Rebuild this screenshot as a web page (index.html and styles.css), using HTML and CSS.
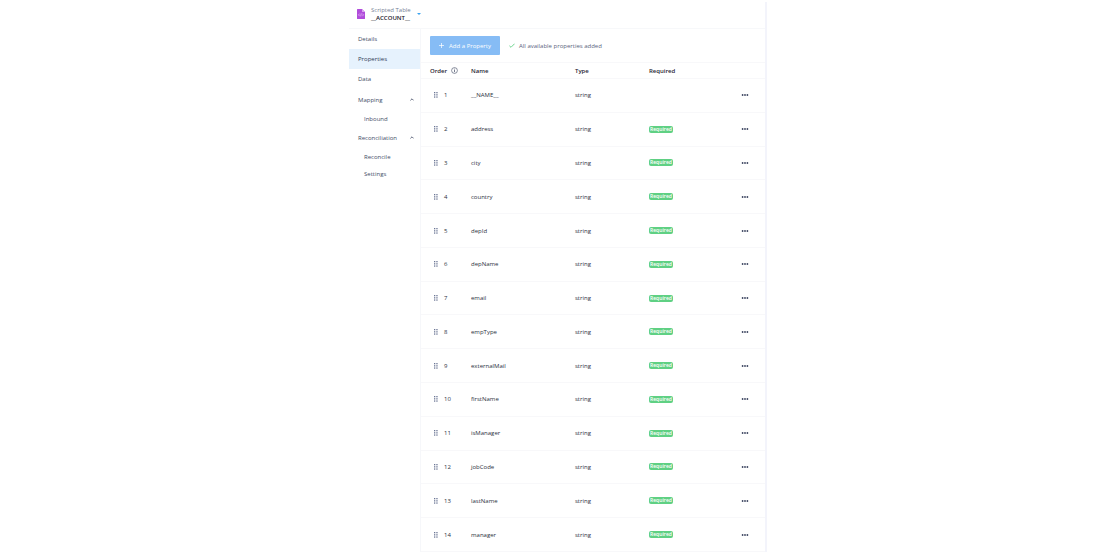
FILE: index.html
```
<!DOCTYPE html>
<html lang="en">
<head>
<meta charset="utf-8">
<title>Scripted Table – Properties</title>
<link rel="stylesheet" href="styles.css">
</head>
<body>
<svg class="sprite" aria-hidden="true">
  <symbol id="grip" viewBox="0 0 4 6"><g fill="#6b7694"><rect x="0" y="0" width="1.3" height="1.3"/><rect x="2.3" y="0" width="1.3" height="1.3"/><rect x="0" y="2.2" width="1.3" height="1.3"/><rect x="2.3" y="2.2" width="1.3" height="1.3"/><rect x="0" y="4.4" width="1.3" height="1.3"/><rect x="2.3" y="4.4" width="1.3" height="1.3"/></g></symbol>
  <symbol id="dots" viewBox="0 0 8 2"><g fill="#3c4560"><circle cx="1.6" cy="1" r=".9"/><circle cx="4" cy="1" r=".9"/><circle cx="6.4" cy="1" r=".9"/></g></symbol>
  <symbol id="up" viewBox="0 0 4 3"><path d="M.4 2.4 2 .8l1.6 1.6" fill="none" stroke="#3c4560" stroke-width=".8"/></symbol>
</svg>
<div class="shell">
  <header class="top">
    <svg class="doc" viewBox="0 0 8 10" aria-hidden="true"><path d="M.6 0H5l3 3v6.4a.6.6 0 0 1-.6.6H.6a.6.6 0 0 1-.6-.6V.6A.6.6 0 0 1 .6 0z" fill="#b14ddb"/><path d="M5 0v3h3z" fill="#d9a3f0"/><path d="M2.7 4.6 1.5 5.9l1.2 1.3M5.3 4.6l1.2 1.3-1.2 1.3M4.3 4.5l-.6 2.8" fill="none" stroke="#f0d4fb" stroke-width=".6"/></svg>
    <div class="title"><span class="kind">Scripted Table</span><strong class="name">__ACCOUNT__</strong></div>
    <button class="switch" aria-label="Switch table"><svg viewBox="0 0 4 2"><path d="M0 0h4L2 2z" fill="#3ba3f0"/></svg></button>
  </header>
  <div class="body">
    <nav class="side">
      <a href="#details">Details</a>
      <a href="#properties" class="active">Properties</a>
      <a href="#data">Data</a>
      <button class="group">Mapping<svg><use href="#up"/></svg></button>
      <a href="#inbound" class="sub">Inbound</a>
      <button class="group">Reconciliation<svg><use href="#up"/></svg></button>
      <a href="#reconcile" class="sub">Reconcile</a>
      <a href="#settings" class="sub">Settings</a>
    </nav>
    <main class="main">
      <div class="bar">
        <button class="add" disabled><svg viewBox="0 0 5 5"><path d="M2.5 0v5M0 2.5h5" stroke="#fff" stroke-width=".7"/></svg>Add a Property</button>
        <svg class="check" viewBox="0 0 6 5"><path d="M.4 2.8 2 4.3 5.6.7" fill="none" stroke="#5fd083" stroke-width=".9"/></svg>
        <span class="note">All available properties added</span>
      </div>
      <table class="props">
        <thead><tr><th class="order">Order <svg class="info" viewBox="0 0 7 7"><circle cx="3.5" cy="3.5" r="2.9" fill="none" stroke="#3c4560" stroke-width=".6"/><path d="M3.5 3v2.1M3.5 1.7v.8" stroke="#3c4560" stroke-width=".7"/></svg></th><th class="col-name">Name</th><th class="col-type">Type</th><th class="col-req">Required</th><th></th></tr></thead>
        <tbody id="rows"></tbody>
      </table>
    </main>
  </div>
</div>
<script src="rows.js"></script>
</body>
</html>
```
FILE: styles.css
```
* { box-sizing: border-box; }
body { margin: 0; padding: 2px 4px 6px 0; background: #fff; color: #2b3040; font: 6px/8px "Open Sans", sans-serif; }
button { font: inherit; color: inherit; border: 0; padding: 0; background: none; }
a { color: inherit; text-decoration: none; }
svg { display: block; flex: none; }
.sprite { position: absolute; width: 0; height: 0; }
.shell { max-width: 418px; margin: 0 auto; border-right: 2px solid #f3f4fb; }
.top { display: flex; align-items: center; height: 27px; padding: 0 8px 2px; border-bottom: 1px solid #f7f8fa; }
.doc { width: 8px; height: 10px; margin-right: 6px; }
.title { display: flex; flex-direction: column; }
.kind { color: #767f96; }
.name { color: #1c202c; font-weight: 600; }
.switch { margin-left: 6px; }
.switch svg { width: 4px; height: 2px; }
.body { display: flex; }
.side { display: flex; flex-direction: column; width: 71px; color: #434d66; }
.side a { display: flex; align-items: center; height: 20px; padding: 0 6px 0 9px; }
.group { display: flex; align-items: center; justify-content: space-between; height: 21px; padding: 0 6px 0 9px; }
.group svg { width: 4px; height: 3px; }
.side .active { background: #e6f2fd; color: #303a54; }
.side .sub { height: 17px; padding-left: 15px; }
.main { flex: 1; border-left: 1px solid #f6f7fa; }
.bar { display: flex; align-items: center; height: 33px; padding-left: 9px; }
.add { display: flex; align-items: center; justify-content: center; gap: 5px; width: 70px; height: 19px; border-radius: 1px; background: #86bcf5; color: #fff; }
.add svg { width: 5px; height: 5px; }
.check { width: 6px; height: 5px; margin: 0 4px 0 9px; }
.note { color: #5a6480; }
.props { width: 100%; height: 490px; border-collapse: collapse; table-layout: fixed; }
th, td { padding: 0; text-align: left; vertical-align: middle; border-top: 1px solid #f8f8fa; }
tbody tr:last-child td { border-bottom: 1px solid #f8f8fa; }
th { height: 16px; color: #1f2433; font-weight: 600; }
.order { width: 50px; padding-left: 9px; }
.info { display: inline-block; width: 7px; height: 7px; margin-left: 2px; vertical-align: -1px; }
.col-name { width: 104px; }
.col-type { width: 74px; }
.col-req { width: 92px; }
.handle { display: flex; align-items: center; gap: 6px; padding-left: 13px; }
.handle svg { width: 4px; height: 6px; }
.badge { display: block; width: 24px; border-radius: 2px; background: #5fd083; color: #fff; font-size: 5px; font-weight: 600; line-height: 7px; text-align: center; }
.more { display: block; padding: 2px 0; }
.more svg { width: 8px; height: 2px; }
```
FILE: rows.js
```
const names = ["__NAME__", "address", "city", "country", "depId", "depName", "email", "empType", "externalMail", "firstName", "isManager", "jobCode", "lastName", "manager"];
document.getElementById("rows").innerHTML = names.map((name, i) => `<tr>
  <td><div class="handle"><svg><use href="#grip"/></svg>${i + 1}</div></td>
  <td>${name}</td>
  <td>string</td>
  <td>${i ? '<span class="badge">Required</span>' : ""}</td>
  <td><button class="more" aria-label="Actions for ${name}"><svg><use href="#dots"/></svg></button></td>
</tr>`).join("");
```
